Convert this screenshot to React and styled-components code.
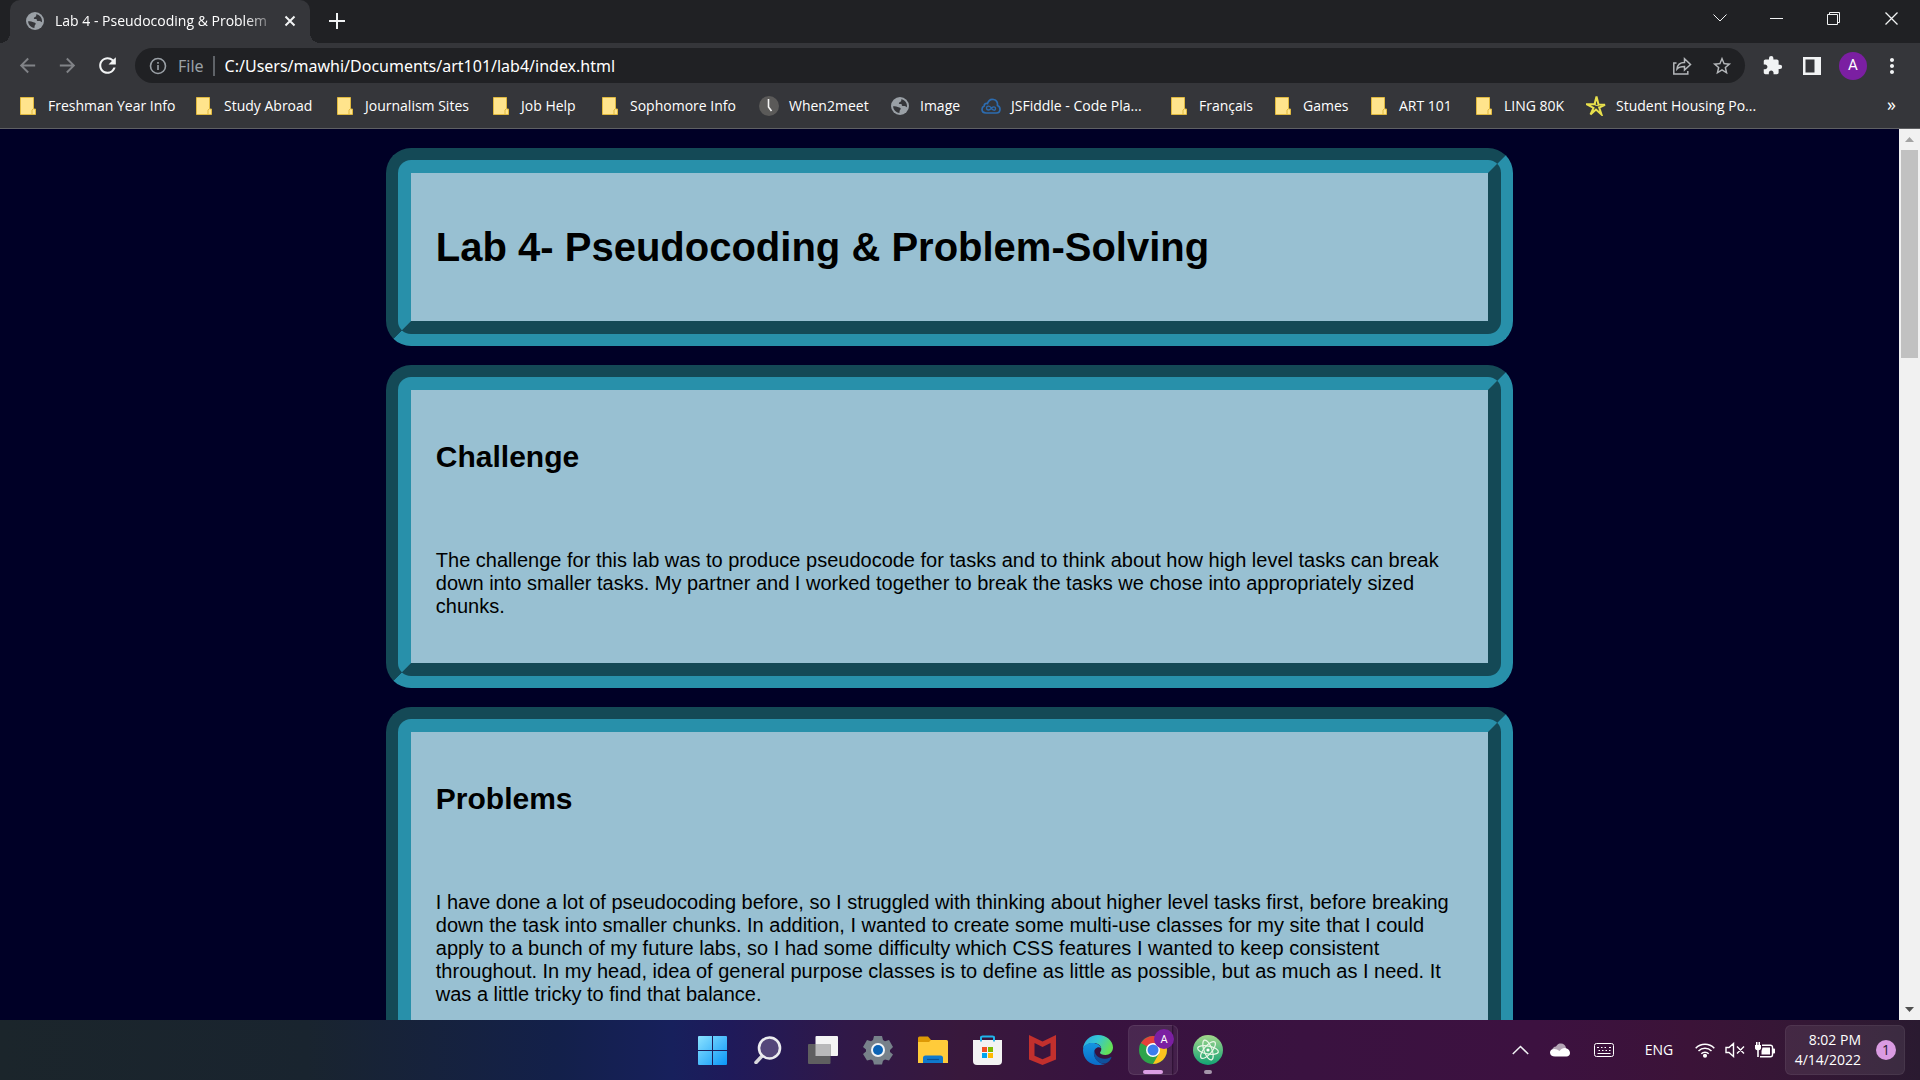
import React from "react";
import styled, { createGlobalStyle } from "styled-components";
import { MdExtension, MdRefresh, MdStarBorder, MdArrowBack, MdArrowForward, MdMoreVert } from "react-icons/md";

const uiFont = '"Open Sans", "Noto Sans", sans-serif';

const GlobalStyle = createGlobalStyle`
  * { box-sizing: border-box; }
  body { margin: 0; background: #000026; }
  button { border: 0; padding: 0; background: none; color: inherit; font: inherit; }
  svg { display: block; }
`;

/* ---------- window ---------- */
const Window = styled.div`
  display: flex;
  flex-direction: column;
  height: 100vh;
  overflow: hidden;
  font-family: ${uiFont};
  color: #fff;
`;

const TabStrip = styled.header`
  display: flex;
  align-items: stretch;
  height: 43px;
  padding-left: 10px;
  background: #202124;
`;

const Tab = styled.div`
  position: relative;
  display: flex;
  align-items: center;
  gap: 11px;
  width: 300px;
  padding: 0 14px 2px 16px;
  border-radius: 10px 10px 0 0;
  background: #35363a;
  font-size: 14px;
  line-height: 20px;
  &::before,
  &::after {
    content: "";
    position: absolute;
    bottom: 0;
    width: 10px;
    height: 10px;
  }
  &::before { left: -10px; background: radial-gradient(circle at 0 0, transparent 10px, #35363a 10px); }
  &::after { right: -10px; background: radial-gradient(circle at 100% 0, transparent 10px, #35363a 10px); }
`;

const TabTitle = styled.span`
  flex: 1;
  min-width: 0;
  white-space: nowrap;
  mask-image: linear-gradient(to right, #000 190px, transparent 224px);
`;

const IconButton = styled.button`
  display: grid;
  place-items: center;
  flex: none;
  width: ${(p) => p.$w || 40}px;
  height: ${(p) => p.$h || 40}px;
  color: ${(p) => p.$color || "#f1f3f4"};
`;

const WindowControls = styled.div`
  display: flex;
  margin-left: auto;
`;

const Toolbar = styled.div`
  display: flex;
  align-items: center;
  height: 45px;
  padding: 0 15px 0 7px;
  background: #35363a;
`;

const Omnibox = styled.label`
  display: flex;
  align-items: center;
  flex: 1;
  height: 35px;
  margin: 0 2px 0 8px;
  padding: 0 3px 0 14px;
  border-radius: 18px;
  background: #202124;
  font: 16px/24px "Noto Sans", sans-serif;
  color: #9aa0a6;
`;

const Scheme = styled.span`
  padding: 0 9px 0 11px;
`;

const Divider = styled.span`
  width: 2px;
  height: 20px;
  background: #5f6368;
`;

const Address = styled.input`
  flex: 1;
  min-width: 0;
  margin-left: 10px;
  padding: 0;
  border: 0;
  outline: 0;
  background: transparent;
  color: #fff;
  font: inherit;
`;

const Avatar = styled.span`
  display: grid;
  place-items: center;
  width: ${(p) => p.$size}px;
  height: ${(p) => p.$size}px;
  border-radius: 50%;
  background: #7b1fa2;
  color: #fff;
  font: ${(p) => p.$font}px/1 Roboto, sans-serif;
`;

const BookmarksBar = styled.nav`
  display: flex;
  align-items: center;
  gap: 20px;
  height: 41px;
  padding: 0 17px 4px 18px;
  border-bottom: 1px solid #5f6063;
  background: #35363a;
  font-size: 14px;
  line-height: 20px;
`;

const Bookmark = styled.a`
  display: flex;
  align-items: center;
  gap: 10px;
  color: #fff;
  text-decoration: none;
  white-space: nowrap;
`;

const BookmarkIcon = styled.span`
  display: grid;
  place-items: center;
  width: 20px;
  height: 20px;
`;

const BookmarkLabel = styled.span`
  width: ${(p) => p.$w}px;
`;

const More = styled.button`
  margin-left: auto;
  padding: 0 7px 4px 0;
  font-size: 18px;
`;

/* ---------- page ---------- */
const Viewport = styled.div`
  display: flex;
  flex: 1;
  min-height: 0;
`;

const Page = styled.main`
  flex: 1;
  min-width: 0;
  overflow: hidden;
  padding: 19px 10px 0;
  background: #000026;
  font-family: "Liberation Sans", Arial, sans-serif;
  color: #000;
`;

const Card = styled.section`
  margin: 0 20% 19px;
  padding: 25px;
  border: 25px groove #2890aa;
  border-radius: 25px;
  background: #98c0d2;
`;

const Title = styled.h1`
  margin: 26px 0;
  font-size: 40px;
  line-height: 46px;
`;

const Heading = styled.h2`
  margin: 25px 0 75px;
  font-size: 30px;
  line-height: 34px;
`;

const Text = styled.p`
  margin: 0 0 20px;
  font-size: 20px;
  line-height: 23px;
`;

const ScrollTrack = styled.div`
  display: flex;
  flex-direction: column;
  align-items: center;
  width: 21px;
  background: #f1f1f1;
`;

const ScrollThumb = styled.div`
  width: 17px;
  height: 23.4%;
  margin-bottom: auto;
  background: #c1c1c1;
`;

/* ---------- taskbar ---------- */
const Taskbar = styled.footer`
  display: grid;
  grid-template-columns: 1fr auto 1fr;
  align-items: center;
  height: 60px;
  background: linear-gradient(
    90deg,
    #1b252b 0%,
    #19242f 16%,
    #13204a 29%,
    #17205c 35%,
    #1f1a5a 38%,
    #301848 44%,
    #38183c 50%,
    #38133f 57%,
    #3a1240 68%,
    #3c1140 80%,
    #3b1338 88%,
    #341735 94%,
    #2a1a30 100%
  );
`;

const Apps = styled.div`
  display: flex;
  grid-column: 2;
`;

const AppButton = styled.button`
  position: relative;
  display: grid;
  place-items: center;
  width: 55px;
  height: 50px;
`;

const ActiveFrame = styled(AppButton)`
  &::before {
    content: "";
    position: absolute;
    inset: 0 2px 0 3px;
    border: 1px solid rgba(255, 255, 255, 0.08);
    border-radius: 6px;
    background: linear-gradient(90deg, rgba(255, 255, 255, 0.09) 43px, rgba(0, 0, 0, 0.25) 43px, rgba(255, 255, 255, 0.06) 45px);
  }
  & > svg { position: relative; }
`;

const Badge = styled.span`
  position: absolute;
  top: 4px;
  right: 6px;
`;

const Indicator = styled.span`
  position: absolute;
  bottom: 1px;
  left: 50%;
  width: ${(p) => p.$w}px;
  height: 4px;
  margin-left: -${(p) => p.$w / 2}px;
  border-radius: 2px;
  background: ${(p) => p.$color};
`;

const Tray = styled.div`
  display: flex;
  align-items: center;
  justify-content: flex-end;
  padding-right: 15px;
`;

const Language = styled.button`
  width: 62px;
  font-size: 14px;
  line-height: 20px;
`;

const Clock = styled.button`
  display: flex;
  align-items: center;
  justify-content: flex-end;
  gap: 15px;
  width: 120px;
  height: 50px;
  margin-left: 5px;
  padding-right: 8px;
  border: 1px solid rgba(255, 255, 255, 0.06);
  border-radius: 6px;
  background: rgba(255, 255, 255, 0.08);
  font-size: 14px;
  line-height: 20px;
  text-align: right;
  white-space: nowrap;
`;

const Count = styled.span`
  display: grid;
  place-items: center;
  width: 20px;
  height: 20px;
  border-radius: 50%;
  background: #da9be2;
  color: #2a1a30;
  font-size: 14px;
`;

/* ---------- drawings ---------- */
const Globe = () => (
  <svg width="18" height="18" viewBox="0 0 18 18">
    <circle cx="9" cy="9" r="9" fill="#9aa0a6" />
    <path d="M10.2 2.2C13.6 2.7 16 5.5 16 9c0 .5 0 .9-.2 1.3-.8-.3-1.2-1-2-1.200-.9-.2-2 .3-2.700-.3-.6-.5-.1-1.300-.8-1.700-.8-.5-2 .2-2.400-.7-.3-.8.6-1.200 1.300-1.500.8-.4 1.300-1 1-2.700z" fill="#35363a" />
    <path d="M2.100 9.300c1.500-.3 3.400-.2 4.600.7.9.7 2.400.4 2.900 1.300.5.9-.6 1.600-.9 2.400-.3.700 0 1.500-.3 2.200C4.900 15.600 2.200 12.900 2.100 9.300z" fill="#35363a" />
  </svg>
);

const Folder = () => (
  <svg width="16" height="18" viewBox="0 0 16 18">
    <path d="M.5.500h13v11.500h2v5.500h-15z" fill="#ffe48c" stroke="#e0b93f" />
    <path d="M12 17.500v-4.500l1.500-1.500" fill="none" stroke="#e0b93f" />
  </svg>
);

const ClockIcon = () => (
  <svg width="20" height="20" viewBox="0 0 20 20">
    <circle cx="10" cy="10" r="10" fill="#5b5a59" />
    <path d="M9.500 3v8l3 4" fill="none" stroke="#f4f4f4" strokeWidth="1.600" />
  </svg>
);

const Fiddle = () => (
  <svg width="20" height="20" viewBox="0 0 20 20" fill="none" stroke="#2c6cb0">
    <path d="M5 17C2.500 17 1 15.400 1 13.300c0-1.600.9-2.800 2.200-3.300C3 8 5 6.800 6.500 7.500 7.500 4.500 10 3 12.500 3.500c3 .6 4.300 3.200 4 6 1.600.7 2.500 2 2.500 3.700 0 2.200-1.600 3.800-3.800 3.800z" strokeWidth="1.700" />
    <path d="M10 12c-1.500-2-4.500-2-4.500.5s3 2.500 4.500.5 4.500-2.500 4.500 0-3 2-4.500-1z" strokeWidth="1.400" transform="translate(0 -.4)" />
  </svg>
);

const HandStar = () => (
  <svg width="20" height="20" viewBox="0 0 20 20" fill="none" stroke="#e8e04c" strokeWidth="2">
    <path d="M10.500 .5 8.500 8.200 1 8.300 7.500 12 4.500 18.500l5.500-5 5.500 5-2.300-7L19 8.800l-6.500-.2z" />
    <path d="M10.500 1 9 9l4 1" strokeWidth="1" />
  </svg>
);

const bookmarks = [
  ["Freshman Year Info", 126, Folder],
  ["Study Abroad", 91, Folder],
  ["Journalism Sites", 106, Folder],
  ["Job Help", 59, Folder],
  ["Sophomore Info", 109, Folder],
  ["When2meet", 81, ClockIcon],
  ["Image", 41, Globe],
  ["JSFiddle - Code Pla...", 138, Fiddle],
  ["Français", 54, Folder],
  ["Games", 46, Folder],
  ["ART 101", 55, Folder],
  ["LING 80K", 62, Folder],
  ["Student Housing Po...", 142, HandStar],
];

const Line = ({ d, w = 20, h = 20, sw = 1, ...rest }) => (
  <svg width={w} height={h} viewBox={`0 0 ${w} ${h}`} fill="none" stroke="currentColor" strokeWidth={sw} {...rest}>
    <path d={d} />
  </svg>
);

const Start = () => (
  <svg width="29" height="29" viewBox="0 0 29 29">
    <defs>
      <linearGradient id="win" x1="0" y1="0" x2="1" y2="1">
        <stop offset="0" stopColor="#8be2ff" />
        <stop offset="1" stopColor="#0a96f8" />
      </linearGradient>
    </defs>
    <path d="M0 1a1 1 0 0 1 1-1h13v14H0zM15 0h13a1 1 0 0 1 1 1v13H15zM0 15h14v14H1a1 1 0 0 1-1-1zM15 15h14v13a1 1 0 0 1-1 1H15z" fill="url(#win)" />
  </svg>
);

const Search = () => (
  <svg width="28" height="28" viewBox="0 0 28 28">
    <path d="m9 19-7 7.500" stroke="#d9d9dd" strokeWidth="3.500" strokeLinecap="round" />
    <circle cx="15.500" cy="12" r="10.500" fill="#55477a" stroke="#ececef" strokeWidth="2.600" />
  </svg>
);

const TaskView = () => (
  <svg width="30" height="28" viewBox="0 0 30 28">
    <rect x="7.500" width="22.500" height="20" rx="1" fill="#f4f4f4" />
    <rect y="8" width="22.500" height="20" rx="1" fill="#5f5f60" />
    <rect x="7.500" y="8" width="15" height="12" fill="#b9b9ba" />
  </svg>
);

const Gear = () => (
  <svg width="30" height="30" viewBox="0 0 30 30">
    <path d="M11 1h8l1 4 2 1.200 4-1.200 4 7-3 3v2l3 2.500-4 6-4-1-2 1.200-1 3.800h-8l-1-3.800L8 24.500l-4 1-4-6.500 3-2.500v-2L0 12l4-7 4 1.200L10 5z" fill="#77818a" />
    <circle cx="15" cy="15" r="7" fill="#f1f4f7" />
    <circle cx="15" cy="15" r="5" fill="#0b63b5" />
  </svg>
);

const Explorer = () => (
  <svg width="30" height="28" viewBox="0 0 30 28">
    <path d="M0 2a1.500 1.500 0 0 1 1.500-1.500H10L13 4v6H0z" fill="#dd9905" />
    <path d="M0 6h11l2-2h15.500A1.500 1.500 0 0 1 30 5.500V27H0z" fill="#ffcb3a" />
    <path d="M5 27v-5a2.500 2.500 0 0 1 2.500-2.500h15A2.500 2.500 0 0 1 25 22v5z" fill="#0f79cd" />
    <path d="M9 23.500h12" stroke="#0a4f93" strokeWidth="1.200" />
  </svg>
);

const Store = () => (
  <svg width="29" height="30" viewBox="0 0 29 30">
    <path d="M8 6.500V3a1.500 1.500 0 0 1 1.500-1.500h10A1.500 1.500 0 0 1 21 3v3.500" fill="none" stroke="#1fb4ea" strokeWidth="1.800" />
    <path d="M0 5h29v21a4 4 0 0 1-4 4H4a4 4 0 0 1-4-4z" fill="#f3f3f3" />
    <path d="M8 1.500V6.500M21 1.500V6.500" stroke="#1fb4ea" strokeWidth="1.800" />
    <path d="M9 12h5v5H9z" fill="#f25022" />
    <path d="M15 12h5v5h-5z" fill="#7fba00" />
    <path d="M9 18h5v5H9z" fill="#00a4ef" />
    <path d="M15 18h5v5h-5z" fill="#ffb900" />
  </svg>
);

const Shield = () => (
  <svg width="27" height="30" viewBox="0 0 27 30">
    <path d="M0 0 13.500 6.500 27 0v24.500L13.500 30 0 24.500zM5.500 8v12.800l8 3.500 8-3.500V8l-8 4z" fill="#c2302d" fillRule="evenodd" />
  </svg>
);

const Edge = () => (
  <svg width="30" height="30" viewBox="0 0 30 30">
    <defs>
      <linearGradient id="edgeTop" x1="0" y1="0" x2="1" y2=".4">
        <stop offset="0" stopColor="#2aa6e2" />
        <stop offset=".5" stopColor="#35c6d4" />
        <stop offset="1" stopColor="#63e058" />
      </linearGradient>
      <linearGradient id="edgeLow" x1="0" y1="0" x2="0" y2="1">
        <stop offset="0" stopColor="#1496e0" />
        <stop offset="1" stopColor="#0a6cc8" />
      </linearGradient>
    </defs>
    <path d="M0 14C.5 6 7 0 15 0c8.500 0 15 6 15 12.500 0 4.500-3.500 7.500-7.500 7.500-3.500 0-5.500-1.200-5.500-2.200 0-.8 1.300-1.300 1.300-3.800C18.300 10.500 15 8 10.500 8 5 8 1 11 0 14z" fill="url(#edgeTop)" />
    <path d="M0 15C0 10.500 4.500 8 9.500 8c4.500 0 8 2.500 8.500 5-3-2-7 .5-7 5 0 6 5 11 11 11-2 .8-4.500 1-7 1C6.500 30 0 23.500 0 15z" fill="url(#edgeLow)" />
    <path d="M11.500 14.500c-2.500 6 2 14 10 14 3 0 5.500-3 6.800-5.600.3-.6-.2-1-.8-.7C20 26 11.500 22.500 11.500 14.500z" fill="#10509c" />
  </svg>
);

const Chrome = () => (
  <svg width="28" height="28" viewBox="0 0 28 28">
    <circle cx="14" cy="14" r="14" fill="#2da44a" />
    <path d="M14 14 1.900 7A14 14 0 0 1 26.100 7z" fill="#e5413a" />
    <path d="M14 7h12.100A14 14 0 0 1 14 28l6-10.500z" fill="#fcc31e" />
    <circle cx="14" cy="14" r="7" fill="#fff" />
    <circle cx="14" cy="14" r="5.500" fill="#3b7ded" />
  </svg>
);

const Atom = () => (
  <svg width="30" height="30" viewBox="0 0 30 30">
    <defs>
      <linearGradient id="atom" x1="0" y1="0" x2="0" y2="1">
        <stop offset="0" stopColor="#a3d68c" />
        <stop offset="1" stopColor="#12a273" />
      </linearGradient>
    </defs>
    <circle cx="15" cy="15" r="15" fill="url(#atom)" />
    <g fill="none" stroke="#e9f7e6" strokeWidth="1.200">
      <ellipse cx="15" cy="15" rx="10.500" ry="4" transform="rotate(10 15 15)" />
      <ellipse cx="15" cy="15" rx="10.500" ry="4" transform="rotate(70 15 15)" />
      <ellipse cx="15" cy="15" rx="10.500" ry="4" transform="rotate(130 15 15)" />
    </g>
    <circle cx="15" cy="15" r="1.600" fill="#fff" />
  </svg>
);

const Cloud = () => (
  <svg width="20" height="14" viewBox="0 0 20 14">
    <path d="M2 8C2 5 4 3.500 6 3.500 7.500 1 9 .5 11 .5c2.500 0 4.500 1.500 5 4.500v4z" fill="#b3a5b4" />
    <path d="M5 13.500c-3 0-5-1.500-5-4S2 6 4.500 6c1.500 0 3.500.8 5 2C11 6 13 4.800 15 5c2.500.3 5 2 5 5 0 2-1.500 3.500-3.500 3.500z" fill="#fff" />
  </svg>
);

const Keyboard = () => (
  <svg width="20" height="14" viewBox="0 0 20 14" fill="none" stroke="#fff">
    <rect x=".5" y=".5" width="19" height="13" rx="2" />
    <path d="M3 4.500h2m2 0h1.500m2 0h1.500m3 0h2M4.500 7.500h1.500m2 0h1.500m2 0h1.500m2 0h1.500M3.500 10.500h13" />
  </svg>
);

const Wifi = () => (
  <svg width="20" height="16" viewBox="0 0 20 16" fill="none" stroke="#fff" strokeWidth="1.500">
    <path d="M.7 6.200a13.200 13.200 0 0 1 18.600 0M3.500 9a9.200 9.200 0 0 1 13 0M6.300 11.800a5.200 5.200 0 0 1 7.400 0" />
    <circle cx="10" cy="13.800" r="1.300" fill="#fff" />
  </svg>
);

const Muted = () => (
  <svg width="20" height="16" viewBox="0 0 20 16" fill="none" stroke="#fff" strokeWidth="1.400">
    <path d="M1 5.500h3L8.500 1.500v13L4 10.500H1zM12 4.500l7 7m0-7-7 7" />
  </svg>
);

const Battery = () => (
  <svg width="20" height="16" viewBox="0 0 20 16">
    <path d="M7 3.200h8.500a2 2 0 0 1 2 2v7.600a2 2 0 0 1-2 2H5" fill="none" stroke="#fff" strokeWidth="1.400" />
    <path d="M7.500 5.500H15v7H6.500V9zM18 6.500h1.200a.8.800 0 0 1 .8.800v3.400a.8.800 0 0 1-.8.800H18zM0 3h1V0h1.500v3h1V0H5v3h1v3c0 1.500-1 2-2.200 2.300V15H2.200V8.300C1 8 0 7.500 0 6z" fill="#fff" />
  </svg>
);

const apps = [
  ["Start", Start],
  ["Search", Search],
  ["Task View", TaskView],
  ["Settings", Gear],
  ["File Explorer", Explorer],
  ["Microsoft Store", Store],
  ["McAfee", Shield],
  ["Microsoft Edge", Edge],
];

export default function App() {
  return (
    <Window>
      <GlobalStyle />
      <TabStrip>
        <Tab>
          <Globe />
          <TabTitle>Lab 4 - Pseudocoding &amp; Problem</TabTitle>
          <IconButton $w={12} $h={20} aria-label="Close tab">
            <Line w={12} h={12} sw={2} d="m1.500 1.500 9 9m0-9-9 9" />
          </IconButton>
        </Tab>
        <IconButton $w={54} $h={42} aria-label="New tab">
          <Line w={16} h={16} sw={2} d="M8 0v16M0 8h16" />
        </IconButton>
        <WindowControls>
          <IconButton $w={57} $h={36} aria-label="Search tabs">
            <Line w={14} h={8} d="m.5.500 6.500 6.500 6.500-6.500" />
          </IconButton>
          <IconButton $w={57} $h={36} aria-label="Minimize">
            <Line w={13} h={1} sw={2} d="M0 .5h13" />
          </IconButton>
          <IconButton $w={57} $h={36} aria-label="Restore">
            <Line w={13} h={13} d="M.5 2.500h10v10H.5zM2.500 2.500v-2h10v10h-2" />
          </IconButton>
          <IconButton $w={58} $h={36} aria-label="Close">
            <Line w={13} h={13} sw={1.300} d="m.5.500 12 12m0-12-12 12" />
          </IconButton>
        </WindowControls>
      </TabStrip>

      <Toolbar>
        <IconButton $color="#818387" aria-label="Back"><MdArrowBack size={23} /></IconButton>
        <IconButton $color="#818387" aria-label="Forward"><MdArrowForward size={23} /></IconButton>
        <IconButton aria-label="Reload"><MdRefresh size={25} /></IconButton>
        <Omnibox>
          <svg width="18" height="18" viewBox="0 0 18 18" fill="none" stroke="#9aa0a6" strokeWidth="1.600">
            <circle cx="9" cy="9" r="7.500" />
            <path d="M9 8v5M9 5v1.800" />
          </svg>
          <Scheme>File</Scheme>
          <Divider />
          <Address aria-label="Address" defaultValue="C:/Users/mawhi/Documents/art101/lab4/index.html" />
          <IconButton $color="#b4b7ba" aria-label="Share">
            <Line w={20} h={20} sw={1.500} d="M4.500 7H1.800v11h14v-3M5 13c.5-5 3.500-6.500 7.500-6.500V2.800L18.500 8.500l-6 5.500v-3.500c-3.500 0-5.500.3-7.500 2.500z" />
          </IconButton>
          <IconButton $color="#b4b7ba" aria-label="Bookmark this page"><MdStarBorder size={22} /></IconButton>
        </Omnibox>
        <IconButton $w={50} aria-label="Extensions"><MdExtension size={21} /></IconButton>
        <IconButton $w={30} aria-label="Side panel">
          <svg width="18" height="18" viewBox="0 0 18 18">
            <path d="M0 0h18v18H0zM2.500 2.500v13h9v-13z" fill="#f1f3f4" fillRule="evenodd" />
          </svg>
        </IconButton>
        <IconButton $w={52} aria-label="Profile">
          <Avatar $size={28} $font={15}>A</Avatar>
        </IconButton>
        <IconButton $w={26} aria-label="Menu"><MdMoreVert size={24} /></IconButton>
      </Toolbar>

      <BookmarksBar>
        {bookmarks.map(([label, width, Icon]) => (
          <Bookmark href="#" key={label}>
            <BookmarkIcon><Icon /></BookmarkIcon>
            <BookmarkLabel $w={width}>{label}</BookmarkLabel>
          </Bookmark>
        ))}
        <More aria-label="More bookmarks">»</More>
      </BookmarksBar>

      <Viewport>
        <Page>
          <Card>
            <Title>Lab 4- Pseudocoding &amp; Problem-Solving</Title>
          </Card>
          <Card>
            <Heading>Challenge</Heading>
            <Text>
              The challenge for this lab was to produce pseudocode for tasks and to think about how high level
              tasks can break down into smaller tasks. My partner and I worked together to break the tasks we
              chose into appropriately sized chunks.
            </Text>
          </Card>
          <Card>
            <Heading>Problems</Heading>
            <Text>
              I have done a lot of pseudocoding before, so I struggled with thinking about higher level tasks
              first, before breaking down the task into smaller chunks. In addition, I wanted to create some
              multi-use classes for my site that I could apply to a bunch of my future labs, so I had some
              difficulty which CSS features I wanted to keep consistent throughout. In my head, idea of general
              purpose classes is to define as little as possible, but as much as I need. It was a little tricky
              to find that balance.
            </Text>
          </Card>
        </Page>
        <ScrollTrack>
          <IconButton $w={21} $h={21} $color="#a3a3a3" aria-label="Scroll up">
            <svg width="9" height="5" viewBox="0 0 9 5"><path d="M0 5 4.500 0 9 5z" fill="currentColor" /></svg>
          </IconButton>
          <ScrollThumb />
          <IconButton $w={21} $h={21} $color="#505050" aria-label="Scroll down">
            <svg width="9" height="5" viewBox="0 0 9 5"><path d="M0 0h9L4.500 5z" fill="currentColor" /></svg>
          </IconButton>
        </ScrollTrack>
      </Viewport>

      <Taskbar>
        <Apps>
          {apps.map(([name, Icon]) => (
            <AppButton key={name} aria-label={name}><Icon /></AppButton>
          ))}
          <ActiveFrame aria-label="Google Chrome">
            <Chrome />
            <Badge><Avatar $size={20} $font={11}>A</Avatar></Badge>
            <Indicator $w={20} $color="#dc9fe4" />
          </ActiveFrame>
          <AppButton aria-label="Atom">
            <Atom />
            <Indicator $w={8} $color="#a595aa" />
          </AppButton>
        </Apps>
        <Tray>
          <IconButton aria-label="Show hidden icons">
            <Line w={17} h={10} sw={1.500} d="m.8 9 7.700-7.500L16.200 9" />
          </IconButton>
          <IconButton aria-label="OneDrive"><Cloud /></IconButton>
          <IconButton $w={48} aria-label="Touch keyboard"><Keyboard /></IconButton>
          <Language>ENG</Language>
          <IconButton $w={30} aria-label="Network"><Wifi /></IconButton>
          <IconButton $w={30} aria-label="Volume"><Muted /></IconButton>
          <IconButton $w={30} aria-label="Battery"><Battery /></IconButton>
          <Clock>
            <span>8:02 PM<br />4/14/2022</span>
            <Count>1</Count>
          </Clock>
        </Tray>
      </Taskbar>
    </Window>
  );
}
